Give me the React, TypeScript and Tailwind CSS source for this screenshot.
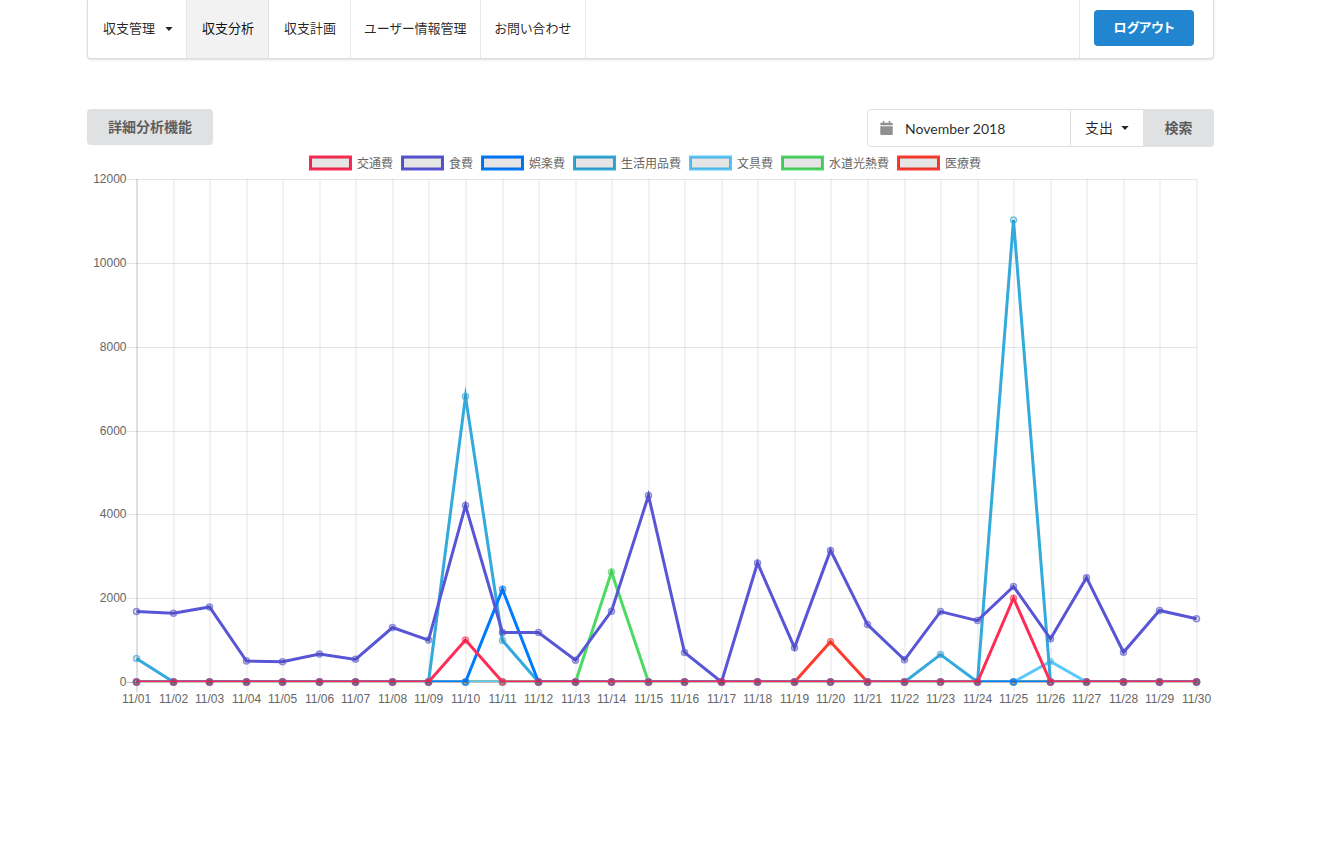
import { useState } from 'react';

const days = Array.from({ length: 30 }, (_, i) => `11/${String(i + 1).padStart(2, '0')}`);

// one value per day, days that are not listed are 0
const fill = (values: Record<number, number>) => days.map((_, i) => values[i + 1] ?? 0);

const series = [
  { name: '交通費', color: '#ff2d55', data: fill({ 10: 1000, 25: 2000 }) },
  {
    name: '食費',
    color: '#5856d6',
    data: [
      1680, 1640, 1790, 500, 485, 668, 540, 1300, 1000, 4210, 1180, 1180, 520, 1690, 4450,
      705, 0, 2840, 820, 3140, 1370, 530, 1680, 1465, 2280, 1030, 2490, 710, 1705, 1510,
    ],
  },
  { name: '娯楽費', color: '#007aff', data: fill({ 11: 2210 }) },
  { name: '生活用品費', color: '#34aadc', data: fill({ 1: 560, 10: 6811, 11: 990, 23: 655, 25: 11020 }) },
  { name: '文具費', color: '#5ac8fa', data: fill({ 26: 490 }) },
  { name: '水道光熱費', color: '#4cd964', data: fill({ 14: 2625 }) },
  { name: '医療費', color: '#ff3b30', data: fill({ 20: 960 }) },
];

const ticks = [0, 2000, 4000, 6000, 8000, 10000, 12000];
const plot = { left: 49, right: 1109, top: 6, bottom: 509 };
const px = (i: number) => Math.round(plot.left + (i * (plot.right - plot.left)) / (days.length - 1)) + 0.5;
const py = (v: number) => plot.bottom - (v * (plot.bottom - plot.top)) / 12000;

const Caret = ({ className = '' }: { className?: string }) => (
  <svg viewBox="0 0 8 4" className={`w-2 h-1 ${className}`} aria-hidden="true">
    <path d="M0.3 0h7.4L4 4z" fill="currentColor" />
  </svg>
);

const Nav = () => (
  <nav className="flex h-[59px] rounded-b border border-t-0 border-[#dededf] bg-white text-[13px] text-black/85 shadow-[0_1px_2px_0_rgba(34,36,38,0.15)] [font-feature-settings:'palt']">
    <button type="button" className="flex items-center pl-[15px] pr-[13px] pb-px border-r border-[#e8e9e9]">
      収支管理
      <Caret className="ml-[10px]" />
    </button>
    <a href="#analysis" className="flex items-center pl-[15px] pr-[14px] pb-px border-r border-[#dededf] bg-[#f2f2f2] text-black/95">収支分析</a>
    <a href="#plan" className="flex items-center pl-[15px] pr-[14px] pb-px border-r border-[#e8e9e9]">収支計画</a>
    <a href="#user" className="flex items-center px-[13px] pb-px border-r border-[#e8e9e9]">ユーザー情報管理</a>
    <a href="#contact" className="flex items-center px-[14px] pb-px border-r border-[#e8e9e9]">お問い合わせ</a>
    <div className="ml-auto flex items-center pl-[14px] pr-[19px] pb-[2px] border-l border-[#e8e9e9]">
      <button type="button" className="h-9 w-[100px] rounded bg-[#2185d0] font-bold text-white">ログアウト</button>
    </div>
  </nav>
);

const Toolbar = () => {
  const [month, setMonth] = useState('November 2018');
  const [kind, setKind] = useState('支出');

  return (
    <div className="mt-[50px] flex items-start justify-between">
      <button type="button" className="h-9 px-[21px] rounded bg-[#e0e1e2] text-sm font-bold text-black/60">詳細分析機能</button>
      <form className="flex h-[38px]" onSubmit={(e) => e.preventDefault()}>
        <label className="flex w-[204px] items-center rounded-l border border-[#dededf] pl-3">
          <svg viewBox="0 0 14 14" className="w-[13px] h-[14px] shrink-0 mr-3 text-[#909090]" preserveAspectRatio="none" aria-hidden="true">
            <path fill="currentColor" d="M3 0h1.6v1.8h4.8V0H11v1.8h1.7c.6 0 1 .4 1 1v1.4H.3V2.8c0-.6.4-1 1-1H3zM.3 5.2h13.4V13c0 .6-.4 1-1 1H1.3c-.6 0-1-.4-1-1z" />
          </svg>
          <input
            type="text"
            aria-label="年月"
            value={month}
            onChange={(e) => setMonth(e.target.value)}
            className="w-full min-w-0 bg-transparent pt-[2px] text-sm text-black/85 outline-none"
          />
        </label>
        <div className="relative flex w-[72px] border-y border-[#dededf]">
          <select
            aria-label="種別"
            value={kind}
            onChange={(e) => setKind(e.target.value)}
            className="w-full appearance-none bg-transparent pl-[14px] text-sm text-black/85 outline-none"
          >
            <option>支出</option>
            <option>収入</option>
          </select>
          <Caret className="pointer-events-none absolute right-[14px] top-4 text-black/85" />
        </div>
        <button type="submit" className="w-[71px] rounded-r bg-[#e0e1e2] text-sm font-bold text-black/60">検索</button>
      </form>
    </div>
  );
};

const Legend = () => (
  <ul className="mt-2 flex h-4 justify-center gap-2 pr-[11px] font-['Liberation_Sans','Noto_Sans_CJK_JP',sans-serif] text-xs leading-[18px] text-[#666]">
    {series.map((s) => (
      <li key={s.name} className="flex gap-[5px] whitespace-nowrap">
        <svg viewBox="0 0 43 16" className="w-[43px] h-4 shrink-0" aria-hidden="true">
          <rect x="1.5" y="2" width="40" height="12" fill="none" stroke={s.color} strokeWidth="3" />
          <rect x="1.5" y="2" width="40" height="12" fill="rgba(0,0,0,0.1)" />
        </svg>
        {s.name}
      </li>
    ))}
  </ul>
);

const LineChart = () => (
  <svg viewBox="0 0 1127 540" className="mt-[2px] block w-full h-auto overflow-visible" role="img" aria-label="2018年11月の支出">
    <defs>
      <clipPath id="plot-area">
        <rect x={plot.left} y={plot.top - 2} width={plot.right - plot.left + 1} height={plot.bottom - plot.top + 2} />
      </clipPath>
    </defs>
    {days.map((d, i) => (
      <line key={d} x1={px(i) + 0.5} x2={px(i) + 0.5} y1={plot.top} y2={plot.bottom + 10} stroke={i === 0 ? 'rgba(0,0,0,0.25)' : 'rgba(0,0,0,0.1)'} />
    ))}
    {ticks.map((t) => (
      <line
        key={t}
        x1={plot.left - 9}
        x2={plot.right + 1}
        y1={Math.round(py(t)) + 0.5}
        y2={Math.round(py(t)) + 0.5}
        stroke={t === 0 ? 'rgba(0,0,0,0.25)' : 'rgba(0,0,0,0.1)'}
      />
    ))}
    <g className="font-['Liberation_Sans',Arial,sans-serif] text-xs" fill="#666">
      {ticks.map((t) => (
        <text key={t} x={plot.left - 9.5} y={Math.round(py(t)) + 4} textAnchor="end">{t}</text>
      ))}
      {days.map((d, i) => (
        <text key={d} x={px(i)} y={530} textAnchor="middle">{d}</text>
      ))}
    </g>
    {/* first series goes on top */}
    {[...series].reverse().map((s) => (
      <g key={s.name}>
        <polyline
          points={s.data.map((v, i) => `${px(i)},${py(v)}`).join(' ')}
          fill="none"
          stroke={s.color}
          strokeWidth="3"
          strokeMiterlimit="10"
          clipPath="url(#plot-area)"
        />
        {s.data.map((v, i) => (
          <circle key={i} cx={px(i)} cy={py(v)} r="3" fill="rgba(0,0,0,0.1)" stroke={s.color} strokeWidth="1.5" strokeOpacity="0.65" />
        ))}
      </g>
    ))}
  </svg>
);

export default function App() {
  return (
    <div className="pl-[87px] pr-[113px] font-[Lato,'Noto_Sans_CJK_JP',sans-serif]" lang="ja">
      <Nav />
      <main>
        <Toolbar />
        <Legend />
        <LineChart />
      </main>
    </div>
  );
}
